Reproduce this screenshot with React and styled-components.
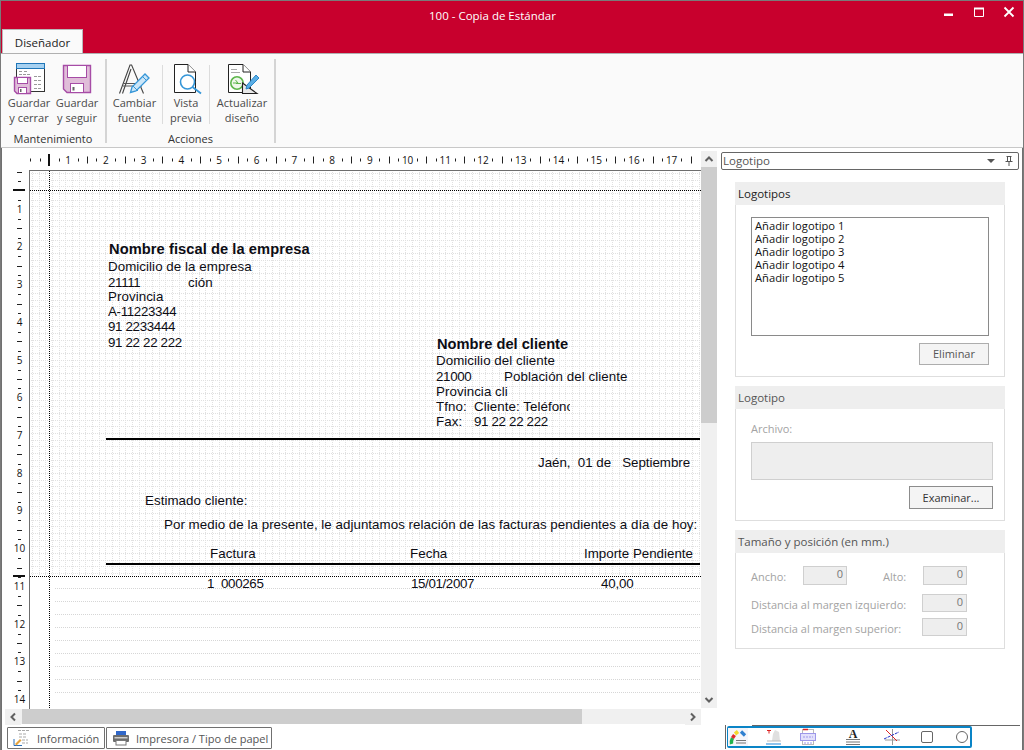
import React from "react";
import styled, { createGlobalStyle } from "styled-components";

const UI = `"Open Sans", "Noto Sans", sans-serif`;
const DOC = `"Liberation Sans", Arial, sans-serif`;

const Global = createGlobalStyle`
  html, body { margin: 0; padding: 0; background: #fff; }
  * { box-sizing: border-box; }
`;

const Window = styled.div`
  width: 1024px; height: 750px; overflow: hidden; display: flex; flex-direction: column;
  border: 1px solid #7a7a7a; border-bottom: 0; background: #fff; font-family: ${UI}; font-size: 11.5px; color: #333;
`;
const TitleBar = styled.header`
  height: 53px; flex: none; background: #c8002d; border-bottom: 1px solid #b0b0b0; display: flex; flex-direction: column;
`;
const TitleRow = styled.div`
  height: 29px; display: flex; align-items: flex-start; justify-content: space-between; padding-left: 428px;
`;
const Title = styled.div`
  color: #fff; font-size: 11.5px; line-height: 14px; margin-top: 8px;
`;
const WinControls = styled.div`display: flex; padding: 5px 8px 0 0; gap: 18px;`;
const WinIcon = styled.svg`width: 12px; height: 12px; display: block;`;
const TabStrip = styled.div`height: 24px; padding-left: 1px; display: flex;`;
const Tab = styled.div`
  width: 81px; height: 24px; background: #fafafa; border: 1px solid #b9b9b9; border-bottom: 0;
  color: #222; font-size: 11.5px; line-height: 25px; text-align: center;
`;

const Ribbon = styled.div`
  height: 94px; flex: none; background: #fafafa; border-bottom: 1px solid #c8c8c8; display: flex; padding-left: 4px;
`;
const RibbonGroup = styled.section`display: flex; flex-direction: column; height: 93px;`;
const RibbonButtons = styled.div`display: flex; height: 72px; padding-top: 8px; align-items: flex-start;`;
const RibbonButton = styled.div`
  width: ${p => p.$w}px; display: flex; flex-direction: column; align-items: center;
  text-align: center; font-size: 11px; line-height: 15px; color: #4a4a4a;
`;
const RibbonIcon = styled.svg`width: 34px; height: 33px; display: block; flex: none; overflow: visible;`;
const InnerSep = styled.div`width: 1px; height: 59px; margin-top: 3px; background: #dcdcdc; flex: none;`;
const GroupLabel = styled.div`margin-top: 5px; text-align: center; font-size: 11px; line-height: 16px; color: #333;`;
const GroupSep = styled.div`width: 2px; height: 84px; margin: 5px ${p => p.$r || 0}px 0 ${p => p.$l || 0}px; background: #d4d4d4; flex: none;`;

const Body = styled.div`
  flex: 1; display: flex; flex-direction: column; border-left: 1px solid #707070; border-right: 1px solid #707070; min-height: 0;
`;
const Content = styled.div`height: 577px; flex: none; display: flex;`;
const Designer = styled.div`
  width: 716px; flex: none; display: grid; grid-template-columns: 27px 672px 16px 1px; grid-template-rows: 22px 539px 16px;
`;
const Corner = styled.div`background: #fff;`;
const RulerSvg = styled.svg`display: block; font-family: ${UI}; font-size: 10px; fill: #111;`;
const VScroll = styled.div`
  grid-column: 3; grid-row: 1 / 3; margin-top: 3px; margin-bottom: 1px; display: flex; flex-direction: column; background: #f0f0f0;
`;
const ScrollArrow = styled.div`width: 16px; height: 16px; flex: none; display: flex; align-items: center; justify-content: center; background: #f0f0f0;`;
const VThumb = styled.div`height: 256px; background: #cdcdcd; flex: none;`;
const ScrollFill = styled.div`flex: 1;`;
const HScroll = styled.div`
  grid-column: 1 / 3; grid-row: 3; margin-left: 3px; display: flex; background: #f0f0f0; height: 15px;
`;
const HThumb = styled.div`width: 560px; margin-left: 1px; background: #cdcdcd; flex: none;`;
const Chevron = styled.svg`width: 10px; height: 10px; display: block;`;

const Canvas = styled.div`
  position: relative; overflow: hidden; background: #fff; border-left: 1px solid #6e6e6e; border-top: 1px solid #6e6e6e;
`;
const GridArt = styled.svg`position: absolute; left: -1px; top: -1px; display: block;`;
const Field = styled.div`
  position: absolute; left: ${p => p.$x}px; top: ${p => p.$y}px; white-space: pre;
  font-family: ${DOC}; font-size: ${p => (p.$bold ? 14.67 : 13.33)}px; font-weight: ${p => (p.$bold ? 700 : 400)};
  line-height: ${p => (p.$bold ? 18 : 17)}px; letter-spacing: ${p => p.$ls}px; color: #0c0c14;
  ${p => (p.$clip ? `width: ${p.$clip}px; overflow: hidden;` : "")}
`;
const Rule = styled.div`
  position: absolute; left: 76px; right: 1px; top: ${p => p.$y}px; height: 2px; background: #000;
`;

const Panel = styled.aside`flex: 1; min-width: 0; background: #fff; padding: 4px 0 0 3px;`;
const Combo = styled.div`
  width: 298px; height: 18px; border: 1px solid #666; border-radius: 2px; display: flex; align-items: center;
  padding: 0 3px 0 1px; font-size: 11.5px; color: #555; line-height: 16px;
`;
const ComboText = styled.span`flex: 1;`;
const ComboGlyph = styled.svg`width: 12px; height: 12px; margin-left: 6px; display: block; flex: none;`;
const Groups = styled.div`padding: 12px 0 0 14px; display: flex; flex-direction: column; gap: 9px; width: 285px;`;
const GroupBox = styled.section`width: 270px;`;
const GroupHead = styled.h3`
  margin: 0; height: 23px; background: #eeeeee; padding-left: 3px; font-weight: 400; font-size: 11.5px; line-height: 23px; color: ${p => (p.$off ? "#555" : "#222")};
`;
const GroupBody = styled.div`
  border: 1px solid #dedede; border-top: 0; padding: ${p => p.$pad}; display: flex; flex-direction: column;
`;
const ListBox = styled.div`
  width: 238px; height: 119px; border: 1px solid #8a8a8a; padding: 1px 3px; font-size: 11.2px; line-height: 13px; color: #111;
`;
const PushButton = styled.div`
  align-self: flex-start; margin-left: ${p => p.$ml}px; margin-top: ${p => p.$mt}px; width: ${p => p.$w}px; height: ${p => p.$h}px; background: #f4f4f4;
  border: 1px solid ${p => (p.$off ? "#adadad" : "#8c8c8c")}; color: ${p => (p.$off ? "#555" : "#333")};
  text-align: center; font-size: 11px; line-height: ${p => p.$h - 2}px;
`;
const Muted = styled.div`font-size: 11px; line-height: 14px; color: #a3a3a3;`;
const FileBox = styled.div`width: 242px; height: 38px; margin-top: 6px; background: #eeeeee; border: 1px solid #cfcfcf;`;
const Row = styled.div`display: flex; align-items: center; width: 216px; margin-top: ${p => p.$mt}px;`;
const RowLabel = styled(Muted)`width: ${p => (p.$w ? `${p.$w}px` : "auto")}; flex: ${p => (p.$w ? "none" : 1)}; padding-left: ${p => p.$pl || 0}px; padding-top: 3px;`;
const NumBox = styled.div`
  width: ${p => p.$w}px; height: ${p => p.$h}px; flex: none; background: #eeeeee; border: 1px solid #cfcfcf; text-align: right;
  padding-right: 3px; font-size: 11px; line-height: 13px; color: #777;
`;

const BottomBar = styled.div`height: 25px; flex: none; display: flex; padding-left: 5px;`;
const DocTabs = styled.div`display: flex; gap: 1px; padding-top: 2px; width: 718px; flex: none;`;
const DocTab = styled.div`
  width: ${p => p.$w}px; height: 22px; border: 1px solid #707070; border-radius: 1px; display: flex; align-items: center;
  padding-left: 5px; font-size: 11px; color: #555; gap: ${p => p.$gap}px;
`;
const TabIcon = styled.svg`width: 18px; height: 18px; display: block; flex: none;`;
const ToolDock = styled.div`
  width: 295px; height: 24px; flex: none; padding: 1px 0 0 1px;
  border-left: 1px solid #666;
  background: linear-gradient(#666, #666) 26px 0 / 100% 1px no-repeat;
`;
const ToolBox = styled.div`
  width: 245px; height: 22px; border: 2px solid #0a84c6; border-radius: 2px; display: flex; align-items: center; background: #fff;
`;
const ToolIcon = styled.svg`width: 20px; height: 18px; display: block; flex: none; margin-left: ${p => p.$ml}px;`;

const Up = () => <Chevron viewBox="0 0 10 10"><path d="M1.5 7 5 3.5 8.5 7" fill="none" stroke="#606060" strokeWidth="2" /></Chevron>;
const Down = () => <Chevron viewBox="0 0 10 10"><path d="M1.5 3 5 6.5 8.5 3" fill="none" stroke="#606060" strokeWidth="2" /></Chevron>;
const Left = () => <Chevron viewBox="0 0 10 10"><path d="M7 1.5 3.5 5 7 8.5" fill="none" stroke="#606060" strokeWidth="2" /></Chevron>;
const Right = () => <Chevron viewBox="0 0 10 10"><path d="M3 1.5 6.5 5 3 8.5" fill="none" stroke="#606060" strokeWidth="2" /></Chevron>;

const CM = 37.72;
const TopRuler = () => {
  const items = [];
  for (let i = 0; i < 72; i++) {
    const x = 1.4 + (i * CM) / 4;
    if (x > 668) break;
    if (i % 4 === 0 && i > 0) {
      items.push(<text key={i} x={x} y={15.5} textAnchor="middle">{i / 4}</text>);
    } else {
      const h = i % 4 === 2 ? 7 : 3;
      items.push(<rect key={i} x={Math.round(x)} y={12 - h / 2} width={1} height={h} fill="#222" />);
    }
  }
  return (
    <RulerSvg width={672} height={22} viewBox="0 0 672 22">
      {items}
      <rect x={19} y={6} width={2} height={12} fill="#111" />
    </RulerSvg>
  );
};
const SideRuler = () => {
  const items = [];
  for (let i = 0; i < 60; i++) {
    const y = 1.5 + (i * CM) / 4;
    if (y > 538) break;
    if (i % 4 === 0 && i > 0) {
      items.push(<text key={i} x={17.5} y={y + 3.5} textAnchor="middle">{i / 4}</text>);
    } else {
      const w = i % 4 === 2 || i === 0 ? 5 : 3;
      items.push(<rect key={i} x={17.5 - w / 2} y={Math.round(y)} width={w} height={1} fill="#222" />);
    }
  }
  return (
    <RulerSvg width={27} height={539} viewBox="0 0 27 539">
      {items}
      <rect x={11} y={19} width={12} height={2} fill="#111" />
      <rect x={11} y={405} width={12} height={2} fill="#111" />
    </RulerSvg>
  );
};

const GridDrawing = () => (
  <GridArt width={672} height={539} viewBox="0 0 672 539" shapeRendering="crispEdges">
    <defs>
      <pattern id="cells" width="20" height="20" patternUnits="userSpaceOnUse">
        <path d="M0 3.5H20M0 10.5H20M0 16.5H20M3.500 0V20M10.500 0V20M16.500 0V20" stroke="#e0e0e0" strokeWidth="1" strokeDasharray="1 1" fill="none" />
      </pattern>
    </defs>
    <rect x="1" y="1" width="671" height="405" fill="url(#cells)" />
    {Array.from({ length: 9 }, (_, i) => (
      <path key={i} d={`M26 ${418.5 + i * 13}H672`} stroke="#d6d6d6" strokeDasharray="1 1" fill="none" />
    ))}
    <path d="M1 20.5H672M1 406.5H672M20.5 1V539" stroke="#000" strokeDasharray="1 1" fill="none" />
  </GridArt>
);

const TXT = 0.06;
const NUM = -0.33;
const fields = [
  { x: 79, y: 69, t: "Nombre fiscal de la empresa", b: true, ls: 0.07 },
  { x: 78, y: 87, t: "Domicilio de la empresa", ls: TXT },
  { x: 78, y: 103, t: "21111", ls: NUM },
  { x: 158, y: 103, t: "ción", ls: TXT },
  { x: 78, y: 117, t: "Provincia", ls: TXT },
  { x: 78, y: 132, t: "A-11223344", ls: NUM },
  { x: 78, y: 147, t: "91 2233444", ls: NUM },
  { x: 78, y: 163, t: "91 22 22 222", ls: NUM },
  { x: 407, y: 164, t: "Nombre del cliente", b: true, ls: 0 },
  { x: 406, y: 181, t: "Domicilio del cliente", ls: TXT },
  { x: 406, y: 197, t: "21000", ls: NUM },
  { x: 474, y: 197, t: "Población del cliente", ls: TXT },
  { x: 406, y: 212, t: "Provincia cliente", clip: 72, ls: TXT },
  { x: 406, y: 227, t: "Tfno:", ls: TXT },
  { x: 444, y: 227, t: "Cliente: Teléfono", clip: 96, ls: TXT },
  { x: 406, y: 242, t: "Fax:", ls: TXT },
  { x: 444, y: 242, t: "91 22 22 222", ls: NUM },
  { x: 508, y: 283, t: "Jaén,  01 de   Septiembre", ls: -0.02 },
  { x: 115, y: 321, t: "Estimado cliente:", ls: TXT },
  { x: 134, y: 345, t: "Por medio de la presente, le adjuntamos relación de las facturas pendientes a día de hoy:", ls: 0.04 },
  { x: 180, y: 374, t: "Factura", ls: TXT },
  { x: 380, y: 374, t: "Fecha", ls: TXT },
  { x: 554, y: 374, t: "Importe Pendiente", ls: 0 },
  { x: 177, y: 404, t: "1", ls: NUM },
  { x: 191, y: 404, t: "000265", ls: NUM },
  { x: 381, y: 404, t: "15/01/2007", ls: -0.37 },
  { x: 571, y: 404, t: "40,00", ls: -0.16 },
];

export default function App() {
  return (
    <>
      <Global />
      <Window>
        <TitleBar>
          <TitleRow>
            <Title>100 - Copia de Estándar</Title>
            <WinControls>
              <WinIcon viewBox="0 0 12 12"><rect x="1" y="7.5" width="9" height="2.5" fill="#fff" /></WinIcon>
              <WinIcon viewBox="0 0 12 12"><path d="M1.5 2.5h9v8h-9z" fill="none" stroke="#fff" /><rect x="1" y="1.5" width="10" height="2" fill="#fff" /></WinIcon>
              <WinIcon viewBox="0 0 12 12"><path d="M1.5 1.500l9 9M10.500 1.500l-9 9" stroke="#fff" strokeWidth="1.8" /></WinIcon>
            </WinControls>
          </TitleRow>
          <TabStrip><Tab>Diseñador</Tab></TabStrip>
        </TitleBar>

        <Ribbon>
          <RibbonGroup>
            <RibbonButtons>
              <RibbonButton $w={48}>
                <RibbonIcon viewBox="0 0 34 33">
                  <rect x="4.500" y="1.500" width="28" height="28" fill="#fff" stroke="#333" />
                  <rect x="4.500" y="1.500" width="28" height="5" fill="#a6d1f1" stroke="#1f76b8" />
                  <path d="M7 9.500h3M12 9.500h4M7 12.500h12M22 14.500h8M22 18.500h8M22 22.500h8M22 26.500h8" stroke="#9a9a9a" strokeDasharray="3 1" />
                  <path d="M2.500 15.500H18.500V31.500H5L2.500 29Z" fill="#e0bdd9" stroke="#a64ca6" strokeWidth="1.4" />
                  <rect x="5.500" y="15.500" width="10" height="6" fill="#fff" stroke="#a64ca6" />
                  <rect x="6.500" y="25.500" width="8" height="6" fill="#fff" stroke="#a64ca6" />
                  <rect x="8" y="27" width="1.500" height="3" fill="#666" />
                </RibbonIcon>
                Guardar<br />y cerrar
              </RibbonButton>
              <RibbonButton $w={48}>
                <RibbonIcon viewBox="0 0 34 33">
                  <path d="M3.500 3.500H30.500V30.500H7L3.500 27Z" fill="#e0bdd9" stroke="#a64ca6" strokeWidth="1.4" />
                  <rect x="7.500" y="3.500" width="19" height="12" fill="#fff" stroke="#a64ca6" />
                  <rect x="10.500" y="21.500" width="13" height="9" fill="#fff" stroke="#a64ca6" />
                  <rect x="12.500" y="25" width="2" height="3.500" fill="#666" />
                </RibbonIcon>
                Guardar<br />y seguir
              </RibbonButton>
            </RibbonButtons>
            <GroupLabel>Mantenimiento</GroupLabel>
          </RibbonGroup>
          <GroupSep $l={4} />
          <RibbonGroup>
            <RibbonButtons>
              <RibbonButton $w={55}>
                <RibbonIcon viewBox="0 0 34 33">
                  <path d="M1.500 31.500 12 3h1.600L25.500 31.500M4.500 31.500 13 7" fill="none" stroke="#444" strokeWidth="1.1" />
                  <path d="M5.500 21.500H23M5 24H24" stroke="#555" strokeWidth="1" />
                  <path d="M12.500 30.500l1.500-5.500L27 12l4 4L18 29Z" fill="#cbe6f8" stroke="#3596d8" strokeWidth="1.3" />
                  <path d="M15 24l5 5M24.500 14.500l4 4" stroke="#3596d8" />
                </RibbonIcon>
                Cambiar<br />fuente
              </RibbonButton>
              <InnerSep />
              <RibbonButton $w={46}>
                <RibbonIcon viewBox="0 0 34 33">
                  <path d="M5.500 2.500H19L26.500 10V30.500H5.500Z" fill="#fff" stroke="#222" />
                  <path d="M19 2.500V10H26.500" fill="#fff" stroke="#222" />
                  <circle cx="18.500" cy="20" r="7" fill="#fff" stroke="#3596d8" strokeWidth="1.600" />
                  <path d="M23.500 25 32 31.500" stroke="#3596d8" strokeWidth="1.800" />
                </RibbonIcon>
                Vista<br />previa
              </RibbonButton>
              <InnerSep />
              <RibbonButton $w={64}>
                <RibbonIcon viewBox="0 0 34 33">
                  <path d="M3.500 2.500H18L25.500 10V30.500H3.500Z" fill="#fff" stroke="#222" />
                  <path d="M18 2.500V10H25.500" fill="#fff" stroke="#222" />
                  <path d="M6 7.500h6M6 10.500h9" stroke="#aaa" />
                  <circle cx="12" cy="21" r="6.200" fill="#eef7ea" stroke="#5cb54a" strokeWidth="1.600" />
                  <path d="M8 21h5l-2.500-3M16 21.500h-5" fill="none" stroke="#5cb54a" />
                  <path d="M17.500 21 32 31.500H17.500Z" fill="#e8e8e8" stroke="#222" strokeWidth="1.100" />
                  <path d="M21 27l1-4L31 13l3 3-10 10Z" fill="#5aaee6" stroke="#2a86c8" />
                </RibbonIcon>
                Actualizar<br />diseño
              </RibbonButton>
            </RibbonButtons>
            <GroupLabel>Acciones</GroupLabel>
          </RibbonGroup>
          <GroupSep />
        </Ribbon>

        <Body>
          <Content>
            <Designer>
              <Corner />
              <TopRuler />
              <VScroll>
                <ScrollArrow><Up /></ScrollArrow>
                <VThumb />
                <ScrollFill />
                <ScrollArrow><Down /></ScrollArrow>
              </VScroll>
              <Corner />
              <SideRuler />
              <Canvas>
                <GridDrawing />
                {fields.map(f => (
                  <Field key={f.t + f.x} $x={f.x} $y={f.y} $bold={f.b} $clip={f.clip} $ls={f.ls}>{f.t}</Field>
                ))}
                <Rule $y={267} />
                <Rule $y={392} />
              </Canvas>
              <Corner />
              <HScroll>
                <ScrollArrow><Left /></ScrollArrow>
                <HThumb />
                <ScrollFill />
                <ScrollArrow><Right /></ScrollArrow>
              </HScroll>
            </Designer>
            <Panel>
              <Combo>
                <ComboText>Logotipo</ComboText>
                <ComboGlyph viewBox="0 0 12 12"><path d="M2 4h8L6 8Z" fill="#555" /></ComboGlyph>
                <ComboGlyph viewBox="0 0 12 12"><path d="M3.500 1.500h5M4.500 1.500v5h3v-5M2.500 6.500h7M6 6.500V11" fill="none" stroke="#555" /></ComboGlyph>
              </Combo>
              <Groups>
                <GroupBox>
                  <GroupHead>Logotipos</GroupHead>
                  <GroupBody $pad="12px 15px 11px">
                    <ListBox>
                      Añadir logotipo 1<br />Añadir logotipo 2<br />Añadir logotipo 3<br />Añadir logotipo 4<br />Añadir logotipo 5
                    </ListBox>
                    <PushButton $off $w={70} $h={22} $ml={168} $mt={7}>Eliminar</PushButton>
                  </GroupBody>
                </GroupBox>
                <GroupBox>
                  <GroupHead $off>Logotipo</GroupHead>
                  <GroupBody $pad="13px 15px 11px">
                    <Muted>Archivo:</Muted>
                    <FileBox />
                    <PushButton $w={84} $h={23} $ml={158} $mt={6}>Examinar...</PushButton>
                  </GroupBody>
                </GroupBox>
                <GroupBox>
                  <GroupHead $off>Tamaño y posición (en mm.)</GroupHead>
                  <GroupBody $pad="13px 15px 12px">
                    <Row $mt={0}>
                      <RowLabel $w={52}>Ancho:</RowLabel>
                      <NumBox $w={44} $h={19}>0</NumBox>
                      <RowLabel $w={76} $pl={36}>Alto:</RowLabel>
                      <NumBox $w={44} $h={19}>0</NumBox>
                    </Row>
                    <Row $mt={9}>
                      <RowLabel>Distancia al margen izquierdo:</RowLabel>
                      <NumBox $w={45} $h={18}>0</NumBox>
                    </Row>
                    <Row $mt={6}>
                      <RowLabel>Distancia al margen superior:</RowLabel>
                      <NumBox $w={45} $h={18}>0</NumBox>
                    </Row>
                  </GroupBody>
                </GroupBox>
              </Groups>
            </Panel>
          </Content>
          <BottomBar>
            <DocTabs>
              <DocTab $w={98} $gap={6}>
                <TabIcon viewBox="0 0 18 18">
                  <path d="M5 1.500h11M6 5h8M6 8h8M9 11h6M9 14h6" stroke="#a9a9a9" strokeWidth="1.200" strokeDasharray="3 1" />
                  <path d="M1 16.500V10M1 16.500h8" stroke="#2a6fb8" />
                  <path d="M2 15l5-5 1.500 1.500-5 5Z" fill="#e8a33c" />
                </TabIcon>
                Información
              </DocTab>
              <DocTab $w={166} $gap={6}>
                <TabIcon viewBox="0 0 18 18">
                  <rect x="4" y="2" width="10" height="5" fill="#3067c9" />
                  <rect x="1" y="6" width="16" height="7" rx="1" fill="#6d6d6d" />
                  <rect x="2.500" y="8" width="13" height="1.500" fill="#cfcfcf" />
                  <rect x="4" y="11.500" width="10" height="4.500" fill="#fff" stroke="#777" />
                </TabIcon>
                Impresora / Tipo de papel
              </DocTab>
            </DocTabs>
            <ToolDock>
              <ToolBox>
                <ToolIcon $ml={-1} viewBox="0 0 20 18">
                  <rect width="20" height="18" fill="#f5f5fa" />
                  <path d="M3.500 16c-.5-2 0-4 1-6" stroke="#22b14c" strokeWidth="3.400" fill="none" />
                  <path d="M4.500 10l2-3" stroke="#e0262a" strokeWidth="3.400" />
                  <path d="M7 6l3-2.500" stroke="#f2d92e" strokeWidth="3.600" />
                  <path d="M13 3.500l4 4" stroke="#2f7fd0" strokeWidth="3.200" />
                  <path d="M8 12.500h10M8 15h10" stroke="#777" />
                </ToolIcon>
                <ToolIcon $ml={16} viewBox="0 0 20 18">
                  <path d="M3 2.500h4M5 2.500v3" stroke="#d22" />
                  <path d="M9 6l2-4 4 2 1 9H8Z" fill="#e0e0e0" />
                  <path d="M3 13h14" stroke="#bbb" />
                  <path d="M2 16h15" stroke="#8fc3ec" strokeWidth="2" />
                </ToolIcon>
                <ToolIcon $ml={14} viewBox="0 0 20 18">
                  <rect x="4.500" y="1.500" width="11" height="15" fill="#fff" stroke="#b9b9b9" />
                  <path d="M5 1.500h5" stroke="#d22" strokeWidth="1.500" />
                  <rect x="2.500" y="5.500" width="15" height="7" fill="#e2e0fb" stroke="#9d97ea" />
                  <path d="M5 9h10M6 15h8" stroke="#9d97ea" strokeDasharray="2 1" />
                </ToolIcon>
                <ToolIcon $ml={25} viewBox="0 0 20 18">
                  <text x="10" y="10" textAnchor="middle" fontFamily="Liberation Serif, serif" fontSize="12" fontWeight="700" fill="#222">A</text>
                  <path d="M3 11.500h14M3 14h14M3 16.500h14" stroke="#777" />
                </ToolIcon>
                <ToolIcon $ml={19} viewBox="0 0 20 18">
                  <path d="M3 12h15M10.500 1v16" stroke="#999" />
                  <path d="M4 2l11 11" stroke="#d22" />
                  <path d="M2 11 17 4" stroke="#2233cc" strokeDasharray="3 1" />
                </ToolIcon>
                <ToolIcon $ml={15} viewBox="0 0 20 18">
                  <rect x="4.500" y="3.500" width="11" height="11" rx="1.500" fill="none" stroke="#666" />
                </ToolIcon>
                <ToolIcon $ml={15} viewBox="0 0 20 18">
                  <circle cx="10" cy="9" r="5.500" fill="none" stroke="#666" />
                </ToolIcon>
              </ToolBox>
            </ToolDock>
          </BottomBar>
        </Body>
      </Window>
    </>
  );
}
